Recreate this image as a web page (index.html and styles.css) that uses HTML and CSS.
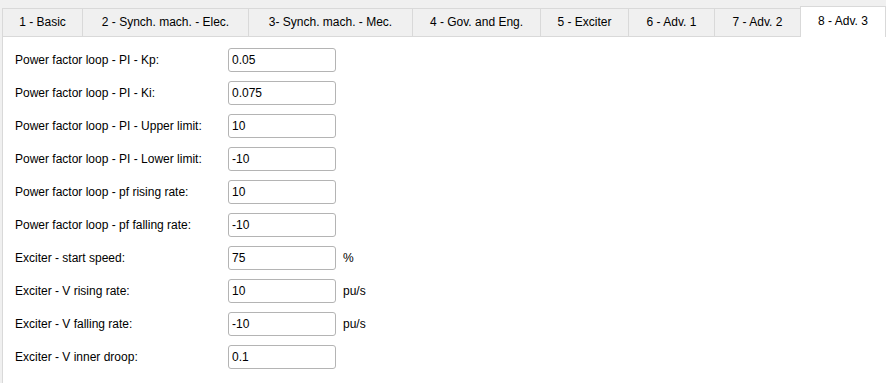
FILE: index.html
```html
<!DOCTYPE html>
<html lang="en">
<head>
    <meta charset="UTF-8">
    <title>Settings</title>
    <link rel="stylesheet" href="styles.css">
</head>
<body>
    <div class="tabs">
        <div class="tab">1 - Basic</div>
        <div class="tab">2 - Synch. mach. - Elec.</div>
        <div class="tab">3- Synch. mach. - Mec.</div>
        <div class="tab">4 - Gov. and Eng.</div>
        <div class="tab">5 - Exciter</div>
        <div class="tab">6 - Adv. 1</div>
        <div class="tab">7 - Adv. 2</div>
        <div class="tab active">8 - Adv. 3</div>
    </div>
    <div class="panel">
        <div class="row"><label>Power factor loop - PI - Kp:</label><input type="text" value="0.05"><span class="unit"></span></div>
        <div class="row"><label>Power factor loop - PI - Ki:</label><input type="text" value="0.075"><span class="unit"></span></div>
        <div class="row"><label>Power factor loop - PI - Upper limit:</label><input type="text" value="10"><span class="unit"></span></div>
        <div class="row"><label>Power factor loop - PI - Lower limit:</label><input type="text" value="-10"><span class="unit"></span></div>
        <div class="row"><label>Power factor loop - pf rising rate:</label><input type="text" value="10"><span class="unit"></span></div>
        <div class="row"><label>Power factor loop - pf falling rate:</label><input type="text" value="-10"><span class="unit"></span></div>
        <div class="row"><label>Exciter - start speed:</label><input type="text" value="75"><span class="unit">%</span></div>
        <div class="row"><label>Exciter - V rising rate:</label><input type="text" value="10"><span class="unit">pu/s</span></div>
        <div class="row"><label>Exciter - V falling rate:</label><input type="text" value="-10"><span class="unit">pu/s</span></div>
        <div class="row"><label>Exciter - V inner droop:</label><input type="text" value="0.1"><span class="unit"></span></div>
    </div>
</body>
</html>
```

FILE: styles.css
```css
body {
    margin: 0;
    background-color: #f0f0f0;
    font-family: 'Liberation Sans', Arial, sans-serif;
    font-size: 12px;
    color: #000;
    height: 383px;
    overflow: hidden;
}

.tabs {
    display: flex;
    align-items: flex-end;
    padding: 8px 0 0 2px;
    height: 28px;
}

.tab {
    box-sizing: border-box;
    height: 28px;
    line-height: 27px;
    text-align: center;
    background-color: #f0f0f0;
    border: 1px solid #d9d9d9;
    border-bottom: none;
    margin-right: -1px;
    white-space: nowrap;
}

.tab:nth-child(1) { width: 81px; }
.tab:nth-child(2) { width: 167px; }
.tab:nth-child(3) { width: 165px; }
.tab:nth-child(4) { width: 129px; }
.tab:nth-child(5) { width: 89px; }
.tab:nth-child(6) { width: 87px; }
.tab:nth-child(7) { width: 87px; }

.tab.active {
    width: 86px;
    height: 31px;
    line-height: 28px;
    background-color: #fff;
    position: relative;
    z-index: 1;
    margin-bottom: -1px;
}

.panel {
    margin-left: 2px;
    border-left: 1px solid #d9d9d9;
    border-top: 1px solid #d9d9d9;
    background-color: #fff;
    height: 346px;
    padding: 11px 0 0 12px;
    display: flex;
    flex-direction: column;
    gap: 9px;
}

.row {
    display: grid;
    grid-template-columns: 206px 108px auto;
    column-gap: 7px;
    align-items: center;
    height: 24px;
}

.row input {
    box-sizing: border-box;
    width: 108px;
    height: 24px;
    border: 1px solid #b4b4b4;
    border-radius: 3px;
    padding: 0 3px;
    font-family: inherit;
    font-size: 12px;
    color: #000;
    background-color: #fff;
}
```
